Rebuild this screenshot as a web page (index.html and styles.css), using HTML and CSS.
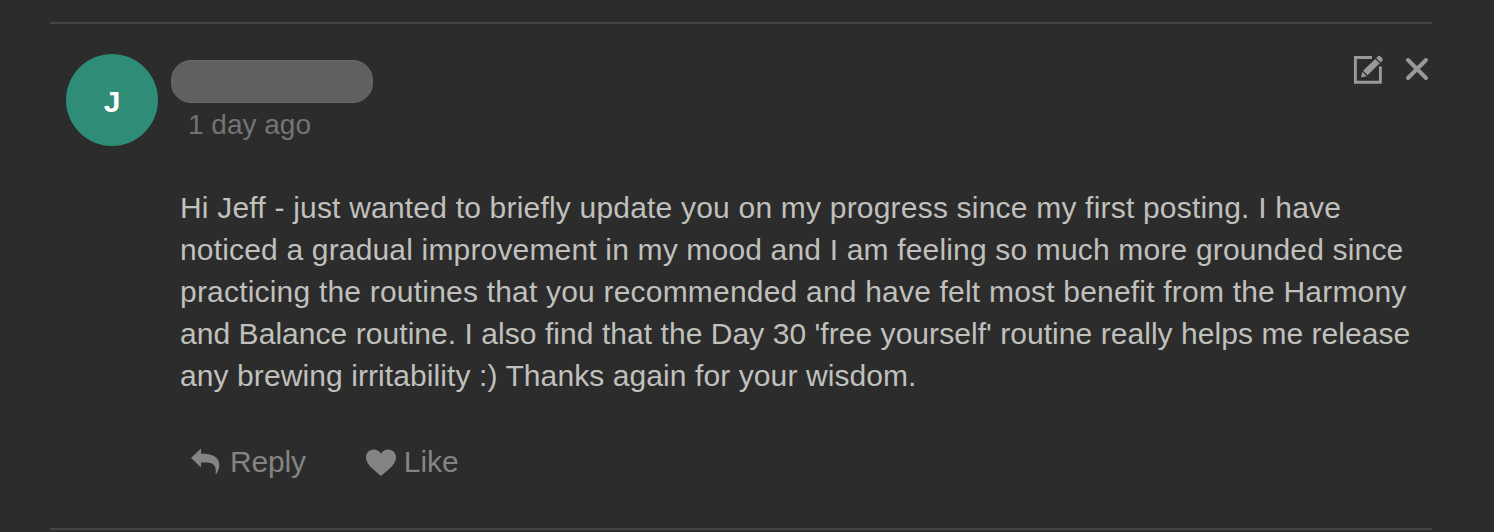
FILE: index.html
```html
<!DOCTYPE html>
<html lang="en">
<head>
<meta charset="utf-8">
<title>Comment</title>
<link rel="stylesheet" href="styles.css">
</head>
<body>
<article class="comment">
  <header class="head">
    <div class="avatar">J</div>
    <div class="meta">
      <div class="name"></div>
      <div class="time">1 day ago</div>
    </div>
    <div class="tools">
      <svg class="edit" viewBox="0 0 32 30" width="32" height="30"><path d="M21 3.500H4.400V28.200H29.400V12.500" fill="none" stroke="currentColor" stroke-width="2.900"/><path d="M10 23.500l1.200-5.800 4.600 4.600zM12 16.700L24.300 4.900l4.400 4.400L16.600 21.300z" fill="currentColor"/><path d="M25.200 4l1.500-1.500q1.400-1.400 2.800 0l1.600 1.600q1.400 1.400 0 2.800L29.600 8.400z" fill="currentColor"/></svg>
      <svg class="close" viewBox="0 0 24 24" width="24" height="24"><path d="M3 3L21 21M21 3L3 21" fill="none" stroke="currentColor" stroke-width="4" stroke-linecap="round"/></svg>
    </div>
  </header>
  <p class="body">
    <span class="line wide">Hi Jeff - just wanted to briefly update you on my progress since my first posting. I have</span>
    <span class="line medium">noticed a gradual improvement in my mood and I am feeling so much more grounded since</span>
    <span class="line wide">practicing the routines that you recommended and have felt most benefit from the Harmony</span>
    <span class="line narrow">and Balance routine. I also find that the Day 30 'free yourself' routine really helps me release</span>
    <span class="line snug">any brewing irritability :) Thanks again for your wisdom.</span>
  </p>
  <footer class="actions">
    <span class="action reply"><svg viewBox="0 0 30 28" width="30" height="28"><path d="M0 10L10 .5V5.600C22 5.600 28.300 9.500 28.300 17C28.300 20.500 27 23.500 25.500 25.800H24.500C26 18 22 14.500 16 14.500H10V19.500z" fill="currentColor"/></svg><span>Reply</span></span>
    <span class="action like"><svg viewBox="0 0 30 27" width="30" height="27"><path d="M15 27C8 21 0 15.500 0 8.500C0 .5 10-2.500 15 4.500C20-2.500 30 .5 30 8.500C30 15.500 22 21 15 27z" fill="currentColor"/></svg><span>Like</span></span>
  </footer>
</article>
</body>
</html>
```
FILE: styles.css
```css
* { box-sizing: border-box; }
body { margin: 0; background: #2c2c2c; font-family: "Liberation Sans", Arial, sans-serif; height: 532px; overflow: hidden; }
.comment { margin: 22px 62px 0 50px; height: 508px; border-top: 2px solid #444; border-bottom: 2px solid #444; padding: 30px 0 0 16px; }
.head { display: flex; height: 92px; }
.avatar { width: 92px; height: 92px; border-radius: 50%; background: #2f8c77; color: #fff; font-weight: 700; font-size: 30px; line-height: 95px; text-align: center; }
.meta { margin: 6px 0 0 13px; }
.name { width: 202px; height: 43px; border-radius: 20px; background: #606060; border: 1px solid #696969; }
.time { margin: 6px 0 0 17px; font-size: 28px; line-height: 32px; color: #747474; white-space: nowrap; }
.tools { display: flex; margin-left: auto; color: #999; }
.close { margin: 3px 3px 0 22px; }
.body { margin: 41px 0 0 114px; font-size: 30px; line-height: 42px; color: #c0c0bc; }
.line { display: block; white-space: nowrap; }
.wide { letter-spacing: 0.2px; }
.medium { letter-spacing: 0.17px; }
.narrow { letter-spacing: 0.05px; }
.snug { letter-spacing: 0.09px; }
.actions { display: flex; margin: 45px 0 0 125px; color: #848484; font-size: 30px; line-height: 40px; }
.action { display: flex; align-items: center; gap: 9px; }
.reply { letter-spacing: -0.2px; }
.like { margin-left: 60px; gap: 8px; }
```
